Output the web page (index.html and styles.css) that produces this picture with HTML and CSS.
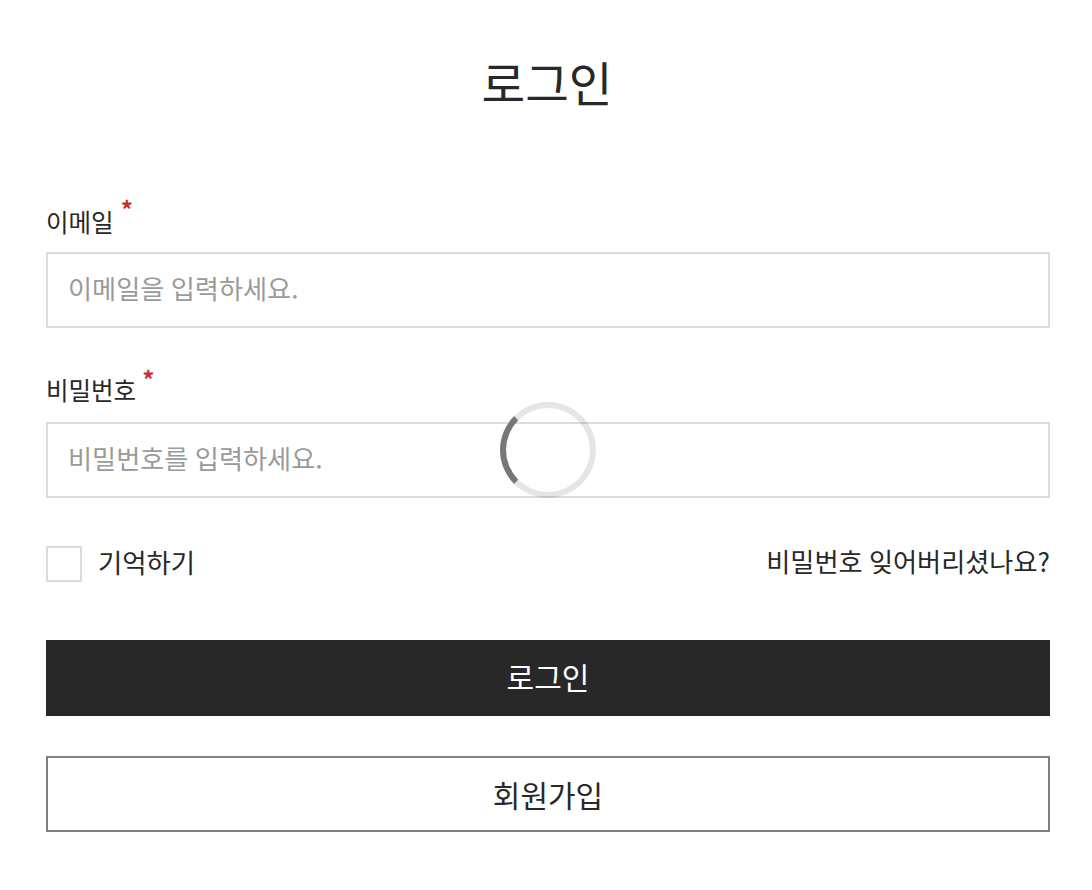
FILE: index.html
```html
<!DOCTYPE html>
<html lang="ko">
<head>
    <meta charset="UTF-8">
    <meta name="viewport" content="width=device-width, initial-scale=1.0">
    <title>로그인</title>
    <link rel="stylesheet" href="styles.css">
</head>
<body>

    <div class="container">
        <h1 class="title">로그인</h1>

        <form class="login-form">
            <!-- Email -->
            <div class="field">
                <label class="field-label" for="email">이메일<span class="required">*</span></label>
                <input class="text-input" id="email" type="text" placeholder="이메일을 입력하세요.">
            </div>

            <!-- Password -->
            <div class="field">
                <label class="field-label password-label" for="password">비밀번호<span class="required">*</span></label>
                <input class="text-input" id="password" type="password" placeholder="비밀번호를 입력하세요.">
            </div>

            <!-- Remember / forgot -->
            <div class="options-row">
                <label class="remember">
                    <input class="remember-box" type="checkbox">
                    <span class="option-text">기억하기</span>
                </label>
                <a class="forgot-link option-text" href="#">비밀번호 잊어버리셨나요?</a>
            </div>

            <button class="login-btn" type="button">로그인</button>
            <button class="signup-btn" type="button">회원가입</button>
        </form>
    </div>

    <!-- Loading spinner -->
    <div class="spinner"></div>

</body>
</html>
```

FILE: styles.css
```css
body {
    background-color: #ffffff;
    color: #282828;
    font-family: "Noto Sans CJK KR", "Noto Sans", sans-serif;
    margin: 0;
}

.container {
    padding: 0 42px 0 46px;
}

.title {
    font-size: 47.5px;
    font-weight: 400;
    line-height: 68px;
    text-align: center;
    margin: 0;
    padding: 48px 2px 0 0;
    height: 68px;
}

.login-form {
    padding-top: 88px;
}

.field {
    margin-bottom: 46px;
}

.field-label {
    display: block;
    font-size: 24.5px;
    line-height: 36px;
    margin-bottom: 13px;
    height: 35px;
}

.password-label {
    line-height: 32px;
}

.required {
    color: #c9302c;
    font-size: 24px;
    font-weight: 700;
    line-height: 1;
    margin-left: 7px;
    position: relative;
    top: -13px;
}

.password-label .required {
    top: -11px;
    margin-left: 6px;
}

.text-input {
    display: block;
    box-sizing: border-box;
    width: 100%;
    height: 76px;
    border: 2px solid #dddddd;
    padding: 0 20px 4px;
    font-family: inherit;
    font-size: 26.2px;
    word-spacing: -1px;
    color: #282828;
    outline: none;
}

.text-input::placeholder {
    color: #9a9a9a;
    opacity: 1;
}

.options-row {
    display: flex;
    justify-content: space-between;
    align-items: center;
    height: 36px;
    margin-top: 48px;
    font-size: 26.4px;
}

.remember {
    display: flex;
    align-items: center;
    gap: 16px;
}

.remember-box {
    appearance: none;
    box-sizing: border-box;
    width: 36px;
    height: 36px;
    margin: 0;
    border: 2px solid #dddddd;
    background-color: #ffffff;
}

.option-text {
    padding-bottom: 6px;
}

.forgot-link {
    color: #282828;
    font-size: 26.2px;
    text-decoration: none;
    word-spacing: -1px;
}

.login-btn, .signup-btn {
    display: block;
    box-sizing: border-box;
    width: 100%;
    height: 76px;
    font-family: inherit;
    font-size: 30px;
    cursor: pointer;
}

.login-btn {
    background-color: #282828;
    color: #ffffff;
    border: none;
    padding: 0 0 4px;
    margin-top: 58px;
}

.signup-btn {
    background-color: #ffffff;
    color: #282828;
    border: 2px solid #7f7f7f;
    padding: 0;
    margin-top: 40px;
}

.spinner {
    position: absolute;
    left: 500px;
    top: 402px;
    box-sizing: border-box;
    width: 96px;
    height: 96px;
    border: 6px solid rgba(0, 0, 0, 0.1);
    border-left-color: #777777;
    border-radius: 50%;
}
```
